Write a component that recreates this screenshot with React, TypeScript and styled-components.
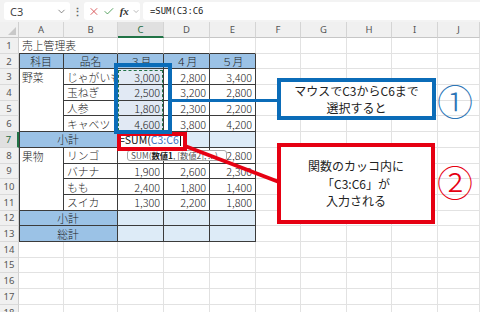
import React from "react";
import styled, { createGlobalStyle, css } from "styled-components";
import { X, Check, ChevronDown } from "lucide-react";

const GlobalStyle = createGlobalStyle`
  html, body { margin: 0; padding: 0; background: #fff; }
  body { font-family: "Noto Sans CJK JP", "Noto Sans", sans-serif; }
`;

const GRID = "#e2e2e2";
const DARK = "#3b3b3b";
const HEAD_BLUE = "#9bc2e6";
const LIGHT_BLUE = "#ddebf7";
const SEL_BLUE = "#e1e9f4";

type Kind = "plain" | "head" | "sum" | "sel";
type Align = "l" | "c" | "r";

type CellDef = {
  t?: string;
  kind?: Kind;
  align?: Align;
  span?: number;
  rspan?: number;
  top?: boolean;
};

const LETTERS = ["A", "B", "C", "D", "E", "F", "G", "H", "I", "J"];

// sheet content, key = "col,row" (col 1 = A)
const cells: Record<string, CellDef> = {
  "1,1": { t: "売上管理表", span: 2 },
  "1,2": { t: "科目", kind: "head", align: "c" },
  "2,2": { t: "品名", kind: "head", align: "c" },
  "3,2": { t: "３月", kind: "head", align: "c" },
  "4,2": { t: "４月", kind: "head", align: "c" },
  "5,2": { t: "５月", kind: "head", align: "c" },
  "1,3": { t: "野菜", rspan: 4, top: true },
  "2,3": { t: "じゃがいも" },
  "3,3": { t: "3,000", kind: "sel", align: "r" },
  "4,3": { t: "2,800", align: "r" },
  "5,3": { t: "3,400", align: "r" },
  "2,4": { t: "玉ねぎ" },
  "3,4": { t: "2,500", kind: "sel", align: "r" },
  "4,4": { t: "3,200", align: "r" },
  "5,4": { t: "2,800", align: "r" },
  "2,5": { t: "人参" },
  "3,5": { t: "1,800", kind: "sel", align: "r" },
  "4,5": { t: "2,300", align: "r" },
  "5,5": { t: "2,200", align: "r" },
  "2,6": { t: "キャベツ" },
  "3,6": { t: "4,600", kind: "sel", align: "r" },
  "4,6": { t: "3,800", align: "r" },
  "5,6": { t: "4,200", align: "r" },
  "1,7": { t: "小計", kind: "head", align: "c", span: 2 },
  "3,7": { kind: "sum" },
  "4,7": { kind: "sum" },
  "5,7": { kind: "sum" },
  "1,8": { t: "果物", rspan: 4, top: true },
  "2,8": { t: "リンゴ" },
  "5,8": { t: "2,800", align: "r" },
  "2,9": { t: "バナナ" },
  "3,9": { t: "1,900", align: "r" },
  "4,9": { t: "2,600", align: "r" },
  "5,9": { t: "2,300", align: "r" },
  "2,10": { t: "もも" },
  "3,10": { t: "2,400", align: "r" },
  "4,10": { t: "1,800", align: "r" },
  "5,10": { t: "1,400", align: "r" },
  "2,11": { t: "スイカ" },
  "3,11": { t: "1,300", align: "r" },
  "4,11": { t: "2,200", align: "r" },
  "5,11": { t: "1,800", align: "r" },
  "1,12": { t: "小計", kind: "head", align: "c", span: 2 },
  "3,12": { kind: "sum" },
  "4,12": { kind: "sum" },
  "5,12": { kind: "sum" },
  "1,13": { t: "総計", kind: "head", align: "c", span: 2 },
  "3,13": { kind: "sum" },
  "4,13": { kind: "sum" },
  "5,13": { kind: "sum" },
};

const ROWS = 18;

const Frame = styled.div`
  position: relative;
  width: 480px;
  height: 312px;
  overflow: hidden;
  display: flex;
  flex-direction: column;
  background: #fff;
`;

/* ---------- formula bar ---------- */

const Bar = styled.div`
  height: 22px;
  flex: none;
  display: flex;
  align-items: center;
  padding-left: 4px;
  background: #f3f3f3;
  font-family: "Noto Sans", sans-serif;
  color: #333;
`;

const NameBox = styled.div`
  width: 66px;
  height: 18px;
  box-sizing: border-box;
  display: flex;
  align-items: center;
  justify-content: space-between;
  padding: 0 3px 0 6px;
  background: #fff;
  border-radius: 3px;
  font-size: 11px;
  color: #444;
`;

const Dots = styled.div`
  width: 14px;
  text-align: center;
  font-size: 11px;
  font-weight: bold;
  color: #666;
`;

const FxBox = styled.div`
  width: 56px;
  height: 18px;
  box-sizing: border-box;
  display: flex;
  align-items: center;
  gap: 3px;
  padding-left: 4px;
  background: #fff;
  border-radius: 3px;
`;

const FxLabel = styled.span`
  font-family: "Liberation Serif", serif;
  font-style: italic;
  font-weight: bold;
  font-size: 11px;
  color: #333;
  margin-left: 2px;
`;

const FormulaInput = styled.div`
  flex: 1;
  height: 18px;
  margin-left: 3px;
  box-sizing: border-box;
  display: flex;
  align-items: center;
  padding-left: 7px;
  background: #fff;
  border-radius: 3px 0 0 3px;
  font-family: "DejaVu Sans Mono", monospace;
  font-size: 8.9px;
  color: #222;
`;

/* ---------- sheet ---------- */

const Sheet = styled.div`
  flex: 1;
  display: grid;
  grid-template-columns: 19px 45px 54px 46px 46px 46px 45px 46px 45px 46px 1fr;
  grid-template-rows: 16px repeat(${ROWS}, 15.7px);
  overflow: hidden;
  font-size: 10.8px;
  font-weight: 300;
  color: #222;
`;

const Corner = styled.div`
  grid-column: 1;
  grid-row: 1;
  position: relative;
  background: #f0f0f0;
  border-right: 1px solid #d0d0d0;
  border-bottom: 1px solid #c6c6c6;
  &::after {
    content: "";
    position: absolute;
    right: 2px;
    bottom: 2px;
    border-left: 8px solid transparent;
    border-bottom: 8px solid #c8c8c8;
  }
`;

const ColHead = styled.div<{ $col: number; $active?: boolean }>`
  grid-column: ${(p) => p.$col + 1};
  grid-row: 1;
  display: flex;
  align-items: center;
  justify-content: center;
  box-sizing: border-box;
  background: #f0f0f0;
  border-right: 1px solid #d4d4d4;
  border-bottom: 1px solid #c6c6c6;
  font-family: "Noto Sans", sans-serif;
  font-weight: 400;
  font-size: 9.5px;
  color: #555;
  ${(p) =>
    p.$active &&
    css`
      background: #e0e0e0;
      color: #1d6b40;
      border-bottom: 2px solid #217346;
    `}
`;

const RowHead = styled.div<{ $row: number; $active?: boolean }>`
  grid-column: 1;
  grid-row: ${(p) => p.$row + 1};
  display: flex;
  align-items: center;
  justify-content: center;
  box-sizing: border-box;
  background: #f0f0f0;
  border-right: 1px solid #d0d0d0;
  border-bottom: 1px solid #dadada;
  font-family: "Noto Sans", sans-serif;
  font-weight: 400;
  font-size: 9.5px;
  color: #555;
  ${(p) =>
    p.$active &&
    css`
      background: #e0e0e0;
      color: #1d6b40;
      border-right: 2px solid #217346;
    `}
`;

const bgFor: Record<Kind, string> = {
  plain: "transparent",
  head: HEAD_BLUE,
  sum: LIGHT_BLUE,
  sel: SEL_BLUE,
};

const Cell = styled.div<{
  $col: number;
  $row: number;
  $span: number;
  $rspan: number;
  $kind: Kind;
  $align: Align;
  $table: boolean;
  $edge: boolean;
  $ruled: boolean;
  $top: boolean;
}>`
  grid-column: ${(p) => p.$col + 1} / span ${(p) => p.$span};
  grid-row: ${(p) => p.$row + 1} / span ${(p) => p.$rspan};
  box-sizing: border-box;
  display: flex;
  align-items: ${(p) => (p.$top ? "flex-start" : "center")};
  justify-content: ${(p) =>
    p.$align === "c" ? "center" : p.$align === "r" ? "flex-end" : "flex-start"};
  padding: 0 3px;
  padding-top: ${(p) => (p.$top ? "1px" : "0")};
  white-space: nowrap;
  overflow: hidden;
  line-height: 14px;
  background: ${(p) => bgFor[p.$kind]};
  border-right: 1px solid ${(p) => (p.$table ? DARK : GRID)};
  border-bottom: 1px solid ${(p) => (p.$table || p.$ruled ? DARK : GRID)};
  box-shadow: ${(p) => (p.$edge ? `inset 1px 0 0 ${DARK}` : "none")};
`;

const Marquee = styled.div`
  grid-column: 4;
  grid-row: 4 / span 4;
  margin: 1px 1px 1px 0;
  border: 1px dashed #217346;
  pointer-events: none;
`;

const Editor = styled.div`
  grid-column: 4 / span 2;
  grid-row: 8;
  z-index: 2;
  justify-self: start;
  width: 66px;
  margin: 1px 0 1px 1px;
  display: flex;
  align-items: center;
  background: #fff;
  font-size: 10.5px;
  font-weight: 400;
  white-space: nowrap;
  overflow: hidden;
  color: #111;
`;

const Ref = styled.span`
  color: #3a73c4;
`;

const Caret = styled.span`
  display: inline-block;
  width: 1px;
  height: 12px;
  background: #111;
  margin-left: 1px;
`;

const Tip = styled.div`
  grid-column: 4 / span 3;
  grid-row: 9;
  z-index: 2;
  justify-self: start;
  align-self: start;
  margin: 2px 0 0 9px;
  width: 100px;
  height: 11px;
  box-sizing: border-box;
  display: flex;
  align-items: center;
  padding: 0 3px;
  overflow: hidden;
  white-space: nowrap;
  background: #fff;
  border: 1px solid #a8a8a8;
  border-radius: 3px;
  font-size: 8.3px;
  font-weight: 400;
  color: #555;
  b {
    color: #222;
  }
`;

/* ---------- annotations ---------- */

const Box = styled.div<{ $x: number; $y: number; $w: number; $h: number; $color: string }>`
  position: absolute;
  left: ${(p) => p.$x}px;
  top: ${(p) => p.$y}px;
  width: ${(p) => p.$w}px;
  height: ${(p) => p.$h}px;
  box-sizing: border-box;
  border: 4px solid ${(p) => p.$color};
  z-index: 5;
`;

const Callout = styled(Box)`
  background: #fff;
  display: flex;
  align-items: center;
  justify-content: center;
  text-align: center;
  font-size: 12px;
  line-height: 17.5px;
  color: #222;
`;

const Badge = styled.div<{ $x: number; $y: number; $color: string }>`
  position: absolute;
  left: ${(p) => p.$x}px;
  top: ${(p) => p.$y}px;
  font-family: "Noto Sans CJK JP", sans-serif;
  font-weight: 300;
  font-size: 36px;
  line-height: 36px;
  color: ${(p) => p.$color};
  z-index: 5;
`;

const Wires = styled.svg`
  position: absolute;
  left: 0;
  top: 0;
  z-index: 4;
  pointer-events: none;
`;

const BLUE = "#0b6cb8";
const RED = "#e60012";

export default function App() {
  const covered = new Set<string>();
  Object.entries(cells).forEach(([k, d]) => {
    const [c, r] = k.split(",").map(Number);
    for (let i = 0; i < (d.span || 1); i++)
      for (let j = 0; j < (d.rspan || 1); j++)
        if (i || j) covered.add(`${c + i},${r + j}`);
  });

  const grid: React.ReactNode[] = [];
  for (let r = 1; r <= ROWS; r++) {
    for (let c = 1; c <= 10; c++) {
      const key = `${c},${r}`;
      if (covered.has(key)) continue;
      const d = cells[key] || {};
      const inTable = r >= 2 && r <= 13 && c <= 5;
      grid.push(
        <Cell
          key={key}
          $col={c}
          $row={r}
          $span={d.span || 1}
          $rspan={d.rspan || 1}
          $kind={d.kind || "plain"}
          $align={d.align || "l"}
          $table={inTable}
          $edge={inTable && c === 1}
          $ruled={r === 1 && c <= 5}
          $top={!!d.top}
        >
          {d.t}
        </Cell>
      );
    }
  }

  return (
    <Frame>
      <GlobalStyle />
      <Bar>
        <NameBox>
          C3
          <ChevronDown size={11} strokeWidth={1.5} color="#555" />
        </NameBox>
        <Dots>⋮</Dots>
        <FxBox>
          <X size={13} strokeWidth={1.6} color="#d13438" />
          <Check size={13} strokeWidth={1.6} color="#2e8b3a" />
          <FxLabel>fx</FxLabel>
          <ChevronDown size={9} strokeWidth={1.5} color="#777" />
        </FxBox>
        <FormulaInput>=SUM(C3:C6</FormulaInput>
      </Bar>
      <Sheet>
        <Corner />
        {LETTERS.map((l, i) => (
          <ColHead key={l} $col={i + 1} $active={l === "C"}>
            {l}
          </ColHead>
        ))}
        {Array.from({ length: ROWS }, (_, i) => (
          <RowHead key={i} $row={i + 1} $active={i + 1 === 7}>
            {i + 1}
          </RowHead>
        ))}
        {grid}
        <Marquee />
        <Editor>
          =SUM(<Ref>C3:C6</Ref>
          <Caret />
        </Editor>
        <Tip>
          SUM(<b>数値1</b>, [数値2], ...)
        </Tip>
      </Sheet>

      <Wires width={480} height={312}>
        <line x1={170} y1={100.5} x2={279} y2={100.5} stroke={BLUE} strokeWidth={3} />
        <line x1={185} y1={146} x2={279} y2={182} stroke={RED} strokeWidth={4} />
      </Wires>
      <Box $x={117} $y={132} $w={70} $h={19} $color={RED} />
      <Box $x={114} $y={63} $w={58} $h={71} $color={BLUE} />
      <Callout $x={277} $y={78} $w={159} $h={42} $color={BLUE}>
        マウスでC3からC6まで
        <br />
        選択すると
      </Callout>
      <Badge $x={437} $y={82} $color="#2e75b6">
        ①
      </Badge>
      <Callout $x={277} $y={143} $w={158} $h={81} $color={RED}>
        関数のカッコ内に
        <br />
        「C3:C6」が
        <br />
        入力される
      </Callout>
      <Badge $x={437} $y={163} $color={RED}>
        ②
      </Badge>
    </Frame>
  );
}
